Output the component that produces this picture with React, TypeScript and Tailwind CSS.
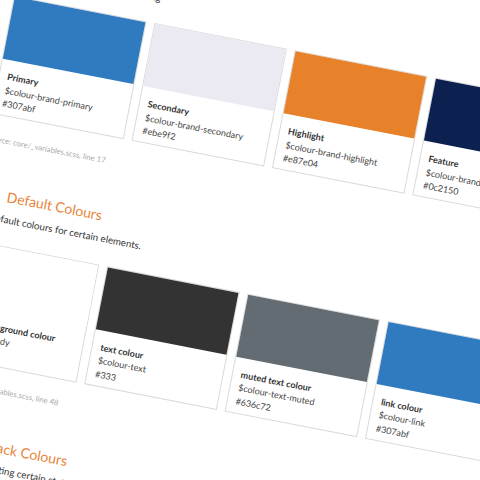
import React from "react";

type Swatch = {
    name: string;
    variable: string;
    hex: string;
    fill?: string;
};

type Section = {
    num: string;
    title: string;
    desc: string;
    source: string;
    swatches: Swatch[];
};

const sections: Section[] = [
    {
        num: "1.1",
        title: "Brand Colours",
        desc: "Colours used for the site branding",
        source: "Source: core/_variables.scss, line 17",
        swatches: [
            { name: "Primary", variable: "$colour-brand-primary", hex: "#307abf" },
            { name: "Secondary", variable: "$colour-brand-secondary", hex: "#ebe9f2" },
            { name: "Highlight", variable: "$colour-brand-highlight", hex: "#e87e04", fill: "#e7822a" },
            { name: "Feature", variable: "$colour-brand-feature", hex: "#0c2150" },
        ],
    },
    {
        num: "1.2",
        title: "Default Colours",
        desc: "The default colours for certain elements.",
        source: "Source: core/_variables.scss, line 48",
        swatches: [
            { name: "body background colour", variable: "$colour-body", hex: "#fff" },
            { name: "text colour", variable: "$colour-text", hex: "#333" },
            { name: "muted text colour", variable: "$colour-text-muted", hex: "#636c72" },
            { name: "link colour", variable: "$colour-link", hex: "#307abf" },
        ],
    },
    {
        num: "1.3",
        title: "Feedback Colours",
        desc: "Colours for indicating certain states.",
        source: "Source: core/_variables.scss, line 60",
        swatches: [
            { name: "success colour", variable: "$colour-success", hex: "#5cb85c" },
            { name: "warning colour", variable: "$colour-warning", hex: "#f0ad4e" },
            { name: "error colour", variable: "$colour-error", hex: "#d9534f" },
        ],
    },
];

const SwatchCard = ({ swatch }: { swatch: Swatch }) => (
    <div className="w-[135px] shrink-0 border border-[#dadada] bg-white">
        <div className="h-[63px]" style={{ backgroundColor: swatch.fill ?? swatch.hex }} />
        <div className="px-[8px] pt-[10px] pb-[4.5px] text-[9px] leading-[13.5px] text-[#444] whitespace-nowrap">
            <div className="font-bold text-[#333]">{swatch.name}</div>
            <div>{swatch.variable}</div>
            <div>{swatch.hex}</div>
        </div>
    </div>
);

export default function App() {
    return (
        <div className="w-[480px] h-[480px] overflow-hidden bg-white font-['Lato',sans-serif]">
            <div className="w-[760px] origin-top-left translate-x-[9.9px] -translate-y-[82.6px] rotate-[11deg] pl-[19px] pt-[20px]">
                {sections.map((s) => (
                    <div key={s.num} className="pb-[42px]">
                        <h2 className="text-[14px] leading-[1.2] text-[#e8843a] font-normal whitespace-nowrap">
                            <span className="mr-[12px]">{s.num}</span>
                            {s.title}
                        </h2>
                        <p className="mt-[8px] text-[9.75px] leading-[1.2] text-[#333] whitespace-nowrap">
                            {s.desc}
                        </p>
                        <div className="mt-[20px] flex gap-[8px]">
                            {s.swatches.map((sw) => (
                                <SwatchCard key={sw.name} swatch={sw} />
                            ))}
                        </div>
                        <p className="mt-[19.5px] text-[7.75px] leading-[1.2] text-[#aaa] whitespace-nowrap">
                            {s.source}
                        </p>
                    </div>
                ))}
            </div>
        </div>
    );
}
